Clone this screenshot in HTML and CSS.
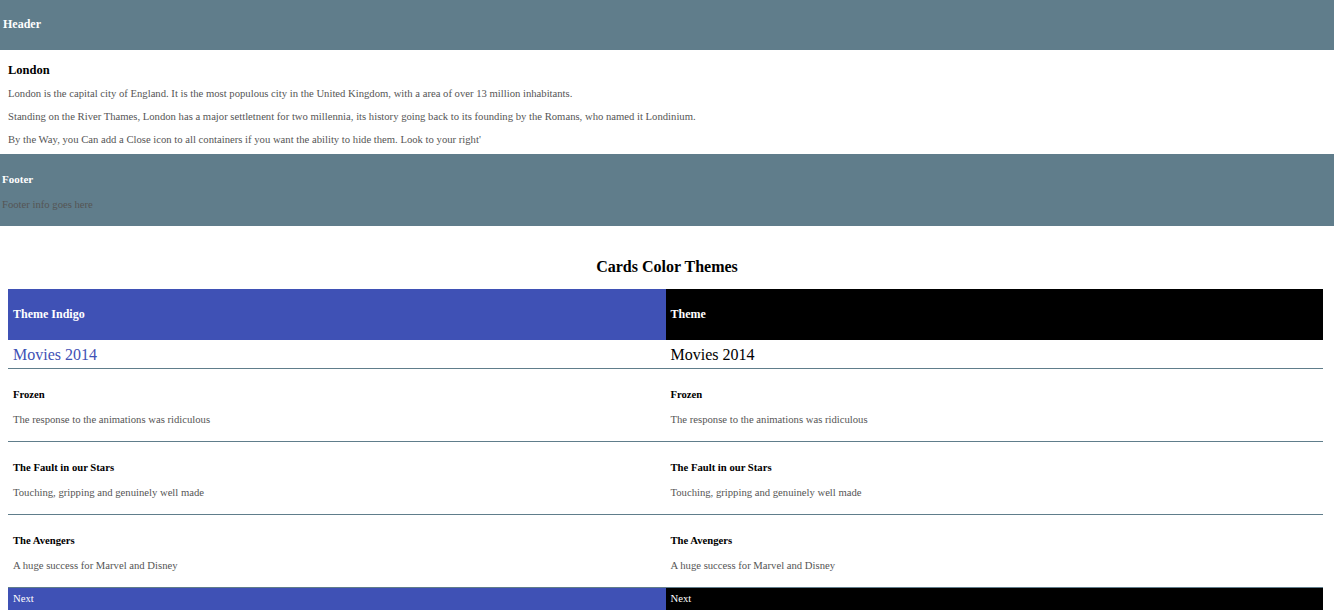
FILE: index.html
```html
<!DOCTYPE html>
<html lang="en">
<head>
<meta charset="utf-8">
<title>Cards</title>
<link rel="stylesheet" href="styles.css">
</head>
<body>
<header class="top-header">Header</header>
<section class="intro">
  <h2 class="intro-title">London</h2>
  <p class="intro-text">London is the capital city of England. It is the most populous city in the United Kingdom, with a area of over 13 million inhabitants.</p>
  <p class="intro-text">Standing on the River Thames, London has a major settletnent for two millennia, its history going back to its founding by the Romans, who named it Londinium.</p>
  <p class="intro-text">By the Way, you Can add a Close icon to all containers if you want the ability to hide them. Look to your right'</p>
</section>
<footer class="top-footer">
  <div class="footer-title">Footer</div>
  <div class="footer-info">Footer info goes here</div>
</footer>

<h1 class="themes-title">Cards Color Themes</h1>
<div class="cards">
  <div class="card card-indigo">
    <div class="card-header">Theme Indigo</div>
    <div class="card-sub">Movies 2014</div>
    <div class="item"><div class="item-title">Frozen</div><div class="item-text">The response to the animations was ridiculous</div></div>
    <div class="item"><div class="item-title">The Fault in our Stars</div><div class="item-text">Touching, gripping and genuinely well made</div></div>
    <div class="item"><div class="item-title">The Avengers</div><div class="item-text">A huge success for Marvel and Disney</div></div>
    <div class="card-footer">Next</div>
  </div>
  <div class="card card-black">
    <div class="card-header">Theme</div>
    <div class="card-sub">Movies 2014</div>
    <div class="item"><div class="item-title">Frozen</div><div class="item-text">The response to the animations was ridiculous</div></div>
    <div class="item"><div class="item-title">The Fault in our Stars</div><div class="item-text">Touching, gripping and genuinely well made</div></div>
    <div class="item"><div class="item-title">The Avengers</div><div class="item-text">A huge success for Marvel and Disney</div></div>
    <div class="card-footer">Next</div>
  </div>
</div>
</body>
</html>
```
FILE: styles.css
```css
* { box-sizing: border-box; }
html, body { margin: 0; padding: 0; }
body {
  font-family: "Liberation Serif", "Times New Roman", serif;
  background: #fff;
  color: #000;
}
.top-header {
  height: 50px;
  background: #607d8b;
  color: #fff;
  font-weight: bold;
  font-size: 12px;
  display: flex;
  align-items: center;
  padding: 0 3px 2px;
}
.intro {
  padding: 13px 8px 8px;
}
.intro-title {
  margin: 0 0 9px;
  font-size: 12.5px;
  line-height: 15px;
  font-weight: bold;
}
.intro-text {
  margin: 0 0 10px;
  font-size: 10.67px;
  line-height: 13px;
  color: #555;
}
.intro-text:last-child { margin-bottom: 0; }
.top-footer {
  background: #607d8b;
  height: 72px;
  padding: 18.5px 2px 0;
}
.footer-title {
  color: #fff;
  font-weight: bold;
  font-size: 11px;
  line-height: 13px;
  margin-bottom: 12px;
}
.footer-info {
  color: #555;
  font-size: 10.67px;
  line-height: 13px;
}
.themes-title {
  margin: 31px 0 12.5px;
  text-align: center;
  font-size: 16px;
  line-height: 19px;
  font-weight: bold;
}
.cards {
  display: grid;
  grid-template-columns: 1fr 1fr;
  margin: 0 11px 0 8px;
}
.card-header {
  height: 51px;
  display: flex;
  align-items: center;
  padding: 0 5px;
  color: #fff;
  font-weight: bold;
  font-size: 12px;
}
.card-sub {
  padding: 5px 5px 3px;
  font-size: 16px;
  line-height: 20px;
  border-bottom: 1px solid #607d8b;
}
.item {
  padding: 19px 5px 15px;
  border-bottom: 1px solid #607d8b;
}
.item-title {
  font-size: 10.67px;
  line-height: 13px;
  font-weight: bold;
  margin-bottom: 12px;
}
.item-text {
  font-size: 10.67px;
  line-height: 13px;
  color: #555;
}
.card-footer {
  color: #fff;
  font-size: 10.67px;
  line-height: 13px;
  padding: 4px 5px 5px;
}
.card-indigo .card-header,
.card-indigo .card-footer { background: #3f51b5; }
.card-indigo .card-sub { color: #3f51b5; }
.card-black .card-header,
.card-black .card-footer { background: #000; }
.card-black .card-sub { color: #000; }
```
